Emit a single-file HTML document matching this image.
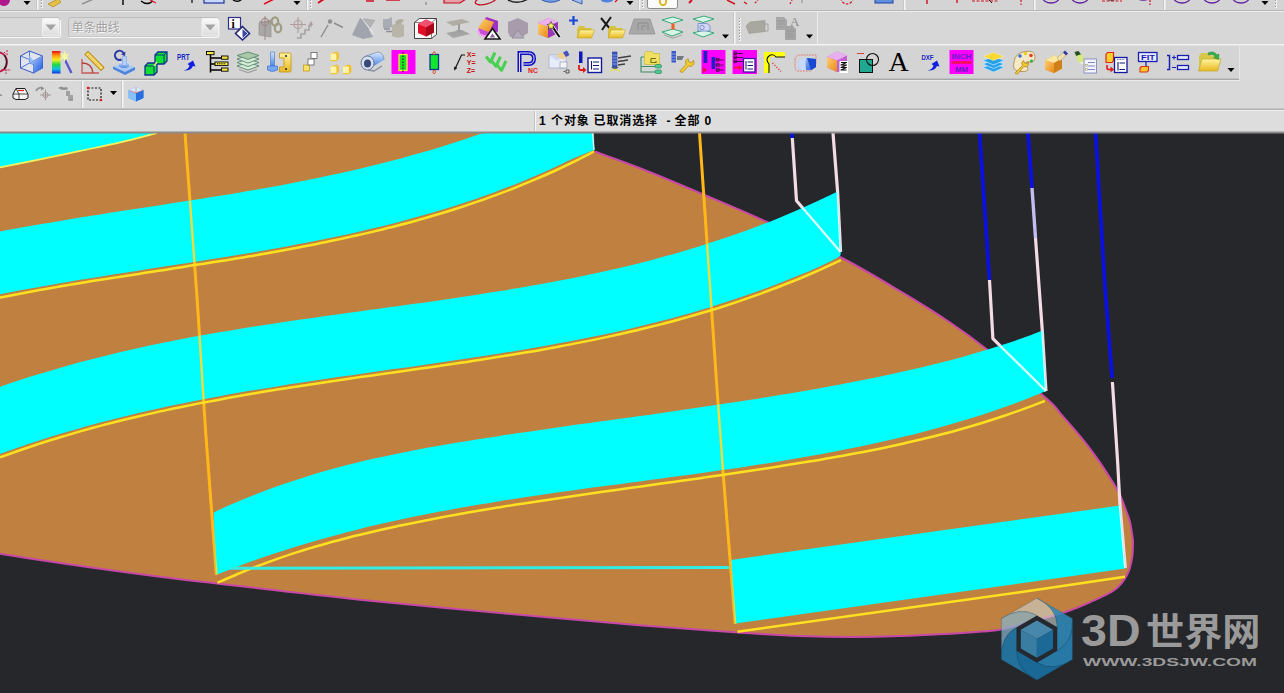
<!DOCTYPE html>
<html lang="zh-CN"><head><meta charset="utf-8"><title>NX</title>
<style>
html,body{margin:0;padding:0;background:#26272b;overflow:hidden}
svg{display:block}
text{font-family:"Liberation Sans","Noto Sans CJK SC",sans-serif}
</style></head><body>
<svg width="1284" height="693" viewBox="0 0 1284 693">
<rect x="0" y="133" width="1284" height="560" fill="#26272b"/>
<path d="M0 133L594 133L594.5 151.5C602.4 154.4 623.2 161.6 642.0 169.0C660.8 176.4 686.2 187.2 707.0 196.0C727.8 204.8 744.5 211.7 767.0 222.0C789.5 232.3 819.8 246.5 842.0 258.0C864.2 269.5 882.0 280.4 900.0 291.2C918.0 301.9 935.7 312.9 950.0 322.5C964.3 332.1 970.0 336.1 986.0 348.7C1002.0 361.3 1033.8 387.4 1046.2 398.2C1058.6 409.0 1054.6 406.9 1060.3 413.3C1066.0 419.7 1074.4 429.2 1080.5 436.6C1086.6 444.0 1091.7 450.7 1096.7 457.8C1101.8 464.9 1107.0 473.0 1110.8 479.0C1114.6 485.0 1117.0 489.0 1119.5 494.0C1122.0 499.0 1123.8 504.3 1125.5 509.0C1127.2 513.7 1128.8 516.8 1130.0 522.0C1131.2 527.2 1132.5 537.0 1133.0 540.0C1132.9 542.9 1133.2 551.5 1132.2 557.3C1131.2 563.1 1130.1 569.4 1127.2 574.8C1124.3 580.2 1121.0 585.2 1114.8 589.8C1108.6 594.4 1098.1 598.6 1089.8 602.3C1081.5 606.0 1074.8 608.9 1064.8 612.2C1054.8 615.5 1040.9 619.1 1030.0 622.0C1019.1 624.9 1012.9 627.8 999.5 629.8C986.1 631.8 970.4 632.6 949.6 633.8C928.8 635.0 899.6 636.4 874.7 636.8C849.8 637.2 823.3 636.8 800.0 636.0C776.7 635.2 751.7 633.3 735.0 632.3C718.3 631.3 715.5 630.9 700.0 629.8C684.5 628.7 651.7 626.2 642.0 625.5C618.3 623.4 547.0 617.3 500.0 613.0C453.0 608.7 407.0 604.6 359.8 599.7C312.6 594.8 250.3 587.3 217.0 583.5C183.7 579.7 179.5 579.3 160.0 576.8C140.5 574.3 118.3 571.2 100.0 568.7C81.7 566.2 66.7 564.0 50.0 561.5C33.3 559.0 8.3 555.1 0.0 553.8Z" fill="#c08040"/>
<path d="M594.5 151.5C602.4 154.4 623.2 161.6 642.0 169.0C660.8 176.4 686.2 187.2 707.0 196.0C727.8 204.8 744.5 211.7 767.0 222.0C789.5 232.3 819.8 246.5 842.0 258.0C864.2 269.5 882.0 280.4 900.0 291.2C918.0 301.9 935.7 312.9 950.0 322.5C964.3 332.1 970.0 336.1 986.0 348.7C1002.0 361.3 1033.8 387.4 1046.2 398.2C1058.6 409.0 1054.6 406.9 1060.3 413.3C1066.0 419.7 1074.4 429.2 1080.5 436.6C1086.6 444.0 1091.7 450.7 1096.7 457.8C1101.8 464.9 1107.0 473.0 1110.8 479.0C1114.6 485.0 1117.0 489.0 1119.5 494.0C1122.0 499.0 1123.8 504.3 1125.5 509.0C1127.2 513.7 1128.8 516.8 1130.0 522.0C1131.2 527.2 1132.5 537.0 1133.0 540.0C1132.9 542.9 1133.2 551.5 1132.2 557.3C1131.2 563.1 1130.1 569.4 1127.2 574.8C1124.3 580.2 1121.0 585.2 1114.8 589.8C1108.6 594.4 1098.1 598.6 1089.8 602.3C1081.5 606.0 1074.8 608.9 1064.8 612.2C1054.8 615.5 1040.9 619.1 1030.0 622.0C1019.1 624.9 1012.9 627.8 999.5 629.8C986.1 631.8 970.4 632.6 949.6 633.8C928.8 635.0 899.6 636.4 874.7 636.8C849.8 637.2 823.3 636.8 800.0 636.0C776.7 635.2 751.7 633.3 735.0 632.3C718.3 631.3 715.5 630.9 700.0 629.8C684.5 628.7 651.7 626.2 642.0 625.5C618.3 623.4 547.0 617.3 500.0 613.0C453.0 608.7 407.0 604.6 359.8 599.7C312.6 594.8 250.3 587.3 217.0 583.5C183.7 579.7 179.5 579.3 160.0 576.8C140.5 574.3 118.3 571.2 100.0 568.7C81.7 566.2 66.7 564.0 50.0 561.5C33.3 559.0 8.3 555.1 0.0 553.8" fill="none" stroke="#c848a8" stroke-width="2"/>
<path d="M185 133L197.2 300L205.5 430L216.4 575" fill="none" stroke="#ffb818" stroke-width="3"/>
<path d="M699.5 133L717.1 390L723.7 480L735.2 624" fill="none" stroke="#ffb818" stroke-width="3"/>
<path d="M792.0 133.0L792.3 138.0" fill="none" stroke="#0a10e0" stroke-width="3.7" stroke-linejoin="round"/>
<path d="M792.3 138.0L796.5 200.7L840.6 252.0" fill="none" stroke="#f4dce4" stroke-width="3.2" stroke-linejoin="round"/>
<path d="M833.0 133.0L837.6 191.6L840.6 252.0" fill="none" stroke="#f4dce4" stroke-width="3.2" stroke-linejoin="round"/>
<path d="M979.5 133.0L989.5 280.0" fill="none" stroke="#0a10e0" stroke-width="3.7" stroke-linejoin="round"/>
<path d="M989.5 280.0L992.9 338.7L1046.0 391.0" fill="none" stroke="#f4dce4" stroke-width="3.2" stroke-linejoin="round"/>
<path d="M1028.0 133.0L1032.0 188.0" fill="none" stroke="#0a10e0" stroke-width="3.7" stroke-linejoin="round"/>
<path d="M1032.0 188.0L1035.5 238.0" fill="none" stroke="#c4bcf0" stroke-width="3.4" stroke-linejoin="round"/>
<path d="M1035.5 238.0L1042.3 330.7L1046.0 391.0" fill="none" stroke="#f4dce4" stroke-width="3.2" stroke-linejoin="round"/>
<path d="M1095.5 133.0L1105.2 290.0L1112.2 378.0" fill="none" stroke="#0a10e0" stroke-width="3.7" stroke-linejoin="round"/>
<path d="M1112.4 382.0L1117.7 463.0L1120.0 505.5L1125.3 568.0" fill="none" stroke="#f4dce4" stroke-width="3.2" stroke-linejoin="round"/>
<path d="M0 133L157.0 133.0C156.2 133.2 158.7 132.6 152.5 134.2C146.3 135.8 132.1 139.6 120.0 142.4C107.9 145.2 93.3 148.1 80.0 150.9C66.7 153.7 53.3 156.6 40.0 159.3C26.7 162.1 6.7 166.1 0.0 167.4Z" fill="#00ffff"/>
<path d="M157.0 133.0C156.2 133.2 158.7 132.6 152.5 134.2C146.3 135.8 132.1 139.6 120.0 142.4C107.9 145.2 93.3 148.1 80.0 150.9C66.7 153.7 53.3 156.6 40.0 159.3C26.7 162.1 6.7 166.1 0.0 167.4" fill="none" stroke="#f4f25c" stroke-width="1.7"/>
<path d="M0.0 231.5C3.3 230.9 13.3 229.0 20.0 227.8C26.7 226.6 33.3 225.4 40.0 224.3C46.7 223.1 53.3 222.0 60.0 220.9C66.7 219.8 73.3 218.7 80.0 217.6C86.7 216.5 93.3 215.5 100.0 214.4C106.7 213.4 113.3 212.3 120.0 211.3C126.7 210.3 133.3 209.3 140.0 208.2C146.7 207.2 153.3 206.2 160.0 205.2C166.7 204.2 173.3 203.1 180.0 202.1C186.7 201.1 193.3 200.0 200.0 199.0C206.7 197.9 213.3 196.8 220.0 195.8C226.7 194.7 233.3 193.6 240.0 192.4C246.7 191.3 253.3 190.2 260.0 189.0C266.7 187.8 273.3 186.6 280.0 185.4C286.7 184.1 293.3 182.9 300.0 181.6C306.7 180.3 313.3 178.9 320.0 177.5C326.7 176.1 333.3 174.7 340.0 173.3C346.7 171.8 353.3 170.3 360.0 168.7C366.7 167.1 373.3 165.5 380.0 163.8C386.7 162.2 393.3 160.4 400.0 158.7C406.7 156.9 413.3 155.0 420.0 153.1C426.7 151.2 433.3 149.2 440.0 147.2C446.7 145.1 453.3 143.0 460.0 140.8C466.7 138.6 476.7 135.1 480.0 134.0L485 133L593.2 133L594.5 150.0C590.9 151.5 579.7 155.7 572.8 158.7C565.9 161.7 559.6 165.0 553.1 168.1C546.5 171.1 539.9 174.0 533.3 176.8C526.8 179.6 520.2 182.3 513.6 184.9C507.0 187.5 500.5 190.0 493.9 192.4C487.3 194.8 480.7 197.2 474.2 199.4C467.6 201.7 461.0 203.8 454.4 205.9C447.9 208.0 441.3 210.0 434.7 212.0C428.1 213.9 421.5 215.8 414.9 217.6C408.4 219.4 401.8 221.2 395.2 222.9C388.6 224.6 382.0 226.2 375.5 227.8C368.9 229.4 362.3 230.9 355.7 232.4C349.1 233.9 342.5 235.3 335.9 236.7C329.3 238.1 322.8 239.5 316.2 240.8C309.6 242.1 303.0 243.4 296.4 244.6C289.8 245.9 283.2 247.1 276.6 248.3C270.0 249.5 263.4 250.6 256.9 251.8C250.3 252.9 243.7 254.0 237.1 255.1C230.5 256.2 223.9 257.3 217.3 258.3C210.7 259.4 204.1 260.4 197.5 261.5C190.9 262.5 184.3 263.6 177.7 264.6C171.1 265.6 164.5 266.6 157.9 267.6C151.3 268.7 144.7 269.7 138.1 270.7C131.5 271.7 124.9 272.7 118.3 273.8C111.7 274.8 105.1 275.9 98.5 276.9C91.9 278.0 85.3 279.0 78.7 280.1C72.1 281.2 65.5 282.3 58.9 283.5C52.3 284.6 45.6 285.7 39.0 286.9C32.4 288.1 25.8 289.3 19.2 290.5C12.6 291.8 2.7 293.7 -0.6 294.4Z" fill="#00ffff"/>
<path d="M0.0 297.5C3.3 296.9 13.2 294.9 19.8 293.7C26.4 292.5 33.0 291.3 39.6 290.1C46.2 288.9 52.8 287.7 59.4 286.6C66.0 285.5 72.6 284.4 79.2 283.3C85.8 282.2 92.4 281.1 99.0 280.1C105.6 279.0 112.2 278.0 118.8 276.9C125.4 275.9 132.0 274.9 138.6 273.9C145.2 272.8 151.8 271.8 158.4 270.8C165.0 269.8 171.6 268.8 178.2 267.7C184.8 266.7 191.4 265.7 198.0 264.6C204.6 263.6 211.2 262.6 217.8 261.5C224.4 260.4 231.0 259.4 237.6 258.3C244.2 257.2 250.8 256.1 257.4 254.9C264.0 253.8 270.6 252.6 277.2 251.4C283.8 250.2 290.4 249.0 297.0 247.8C303.6 246.5 310.2 245.2 316.8 243.9C323.4 242.6 330.0 241.2 336.6 239.8C343.2 238.4 349.8 237.0 356.4 235.5C363.0 234.0 369.6 232.5 376.2 230.9C382.8 229.3 389.4 227.7 396.0 226.0C402.6 224.3 409.2 222.5 415.8 220.7C422.4 218.9 429.0 217.0 435.6 215.0C442.2 213.1 448.8 211.1 455.4 209.0C462.0 206.9 468.6 204.7 475.2 202.4C481.8 200.2 488.4 197.8 495.0 195.4C501.6 193.0 508.2 190.5 514.8 187.8C521.4 185.2 528.0 182.5 534.6 179.7C541.2 176.9 547.8 174.0 554.4 171.0C561.0 167.9 567.6 164.8 574.2 161.6C580.8 158.3 590.7 153.2 594.0 151.5" fill="none" stroke="#ffe020" stroke-width="2.5"/>
<path d="M0.0 386.9C3.3 385.8 13.3 382.3 19.9 380.1C26.6 378.0 33.2 375.8 39.9 373.8C46.5 371.8 53.2 369.8 59.8 367.9C66.5 366.0 73.1 364.1 79.8 362.3C86.4 360.6 93.1 358.8 99.7 357.2C106.4 355.5 113.0 353.9 119.7 352.3C126.3 350.8 133.0 349.3 139.6 347.8C146.2 346.3 152.9 344.9 159.5 343.5C166.2 342.2 172.8 340.9 179.5 339.6C186.1 338.3 192.8 337.0 199.4 335.8C206.1 334.6 212.7 333.4 219.4 332.3C226.0 331.1 232.7 330.0 239.3 328.9C246.0 327.8 252.6 326.8 259.3 325.8C265.9 324.7 272.6 323.7 279.2 322.7C285.8 321.7 292.5 320.7 299.1 319.8C305.8 318.8 312.4 317.9 319.1 316.9C325.7 316.0 332.4 315.1 339.0 314.2C345.7 313.2 352.3 312.3 359.0 311.4C365.6 310.5 372.3 309.6 378.9 308.7C385.6 307.8 392.2 306.9 398.9 306.0C405.5 305.0 412.2 304.1 418.8 303.2C425.4 302.3 432.1 301.3 438.7 300.4C445.4 299.4 452.0 298.5 458.7 297.5C465.3 296.5 472.0 295.5 478.6 294.5C485.3 293.4 491.9 292.4 498.6 291.3C505.2 290.2 511.9 289.1 518.5 288.0C525.2 286.9 531.8 285.7 538.5 284.5C545.1 283.3 551.8 282.1 558.4 280.8C565.0 279.6 571.7 278.2 578.3 276.9C585.0 275.5 591.6 274.1 598.3 272.7C604.9 271.2 611.6 269.7 618.2 268.2C624.9 266.6 631.5 265.0 638.2 263.4C644.8 261.7 651.5 260.0 658.1 258.2C664.8 256.4 671.4 254.6 678.1 252.7C684.7 250.7 691.4 248.8 698.0 246.7C704.6 244.7 711.3 242.5 717.9 240.3C724.6 238.1 731.2 235.9 737.9 233.5C744.5 231.2 751.2 228.7 757.8 226.2C764.5 223.7 771.1 221.1 777.8 218.4C784.4 215.7 791.1 212.9 797.7 210.0C804.4 207.2 811.0 204.2 817.7 201.1C824.3 198.1 834.3 193.2 837.6 191.6L840.6 252.0C840.2 252.8 842.0 254.6 838.5 257.0C835.0 259.4 826.1 263.4 819.7 266.4C813.2 269.4 806.4 272.3 799.7 275.0C793.1 277.8 786.4 280.5 779.8 283.0C773.1 285.6 766.5 288.1 759.8 290.6C753.2 293.0 746.5 295.3 739.9 297.6C733.2 299.8 726.5 302.0 719.9 304.1C713.2 306.2 706.6 308.3 699.9 310.2C693.3 312.2 686.6 314.1 680.0 315.9C673.3 317.8 666.6 319.5 660.0 321.3C653.3 323.0 646.7 324.6 640.0 326.2C633.4 327.8 626.7 329.4 620.0 330.9C613.4 332.4 606.7 333.8 600.1 335.2C593.4 336.6 586.7 338.0 580.1 339.3C573.4 340.6 566.7 341.9 560.1 343.1C553.4 344.4 546.8 345.6 540.1 346.7C533.4 347.9 526.8 349.1 520.1 350.2C513.4 351.3 506.8 352.4 500.1 353.4C493.4 354.5 486.8 355.5 480.1 356.6C473.4 357.6 466.7 358.6 460.1 359.6C453.4 360.6 446.7 361.6 440.1 362.5C433.4 363.5 426.7 364.5 420.0 365.4C413.4 366.4 406.7 367.3 400.0 368.3C393.4 369.2 386.7 370.1 380.0 371.1C373.3 372.0 366.7 373.0 360.0 373.9C353.3 374.9 346.6 375.9 339.9 376.8C333.3 377.8 326.6 378.8 319.9 379.8C313.2 380.8 306.6 381.8 299.9 382.8C293.2 383.8 286.5 384.9 279.8 385.9C273.1 387.0 266.5 388.1 259.8 389.2C253.1 390.3 246.4 391.4 239.7 392.6C233.1 393.8 226.4 395.0 219.7 396.2C213.0 397.4 206.3 398.7 199.6 400.0C192.9 401.3 186.3 402.6 179.6 404.0C172.9 405.4 166.2 406.8 159.5 408.3C152.8 409.8 146.1 411.3 139.4 412.8C132.7 414.4 126.1 416.0 119.4 417.7C112.7 419.4 106.0 421.1 99.3 422.8C92.6 424.6 85.9 426.5 79.2 428.4C72.5 430.2 65.8 432.2 59.1 434.2C52.5 436.3 45.8 438.3 39.1 440.5C32.4 442.7 25.7 444.9 19.0 447.2C12.3 449.5 2.3 453.1 -1.1 454.3Z" fill="#00ffff"/>
<path d="M0.0 457.3C3.3 456.1 13.3 452.5 20.0 450.2C26.7 447.9 33.4 445.7 40.0 443.5C46.7 441.4 53.4 439.3 60.1 437.3C66.7 435.3 73.4 433.3 80.1 431.4C86.8 429.5 93.4 427.7 100.1 425.9C106.8 424.2 113.5 422.5 120.1 420.8C126.8 419.1 133.5 417.5 140.2 416.0C146.8 414.4 153.5 412.9 160.2 411.4C166.9 410.0 173.5 408.5 180.2 407.2C186.9 405.8 193.6 404.4 200.2 403.1C206.9 401.8 213.6 400.6 220.3 399.4C226.9 398.1 233.6 396.9 240.3 395.8C247.0 394.6 253.6 393.5 260.3 392.3C267.0 391.2 273.7 390.2 280.3 389.1C287.0 388.0 293.7 387.0 300.4 386.0C307.0 384.9 313.7 383.9 320.4 382.9C327.1 381.9 333.7 381.0 340.4 380.0C347.1 379.0 353.8 378.1 360.4 377.1C367.1 376.2 373.8 375.2 380.5 374.3C387.1 373.3 393.8 372.4 400.5 371.4C407.2 370.5 413.8 369.5 420.5 368.6C427.2 367.6 433.8 366.7 440.5 365.7C447.2 364.7 453.9 363.7 460.5 362.8C467.2 361.8 473.9 360.8 480.6 359.7C487.2 358.7 493.9 357.7 500.6 356.6C507.3 355.5 513.9 354.4 520.6 353.3C527.3 352.2 534.0 351.1 540.6 349.9C547.3 348.7 554.0 347.5 560.7 346.3C567.3 345.0 574.0 343.8 580.7 342.4C587.4 341.1 594.0 339.8 600.7 338.4C607.4 336.9 614.1 335.5 620.7 334.0C627.4 332.5 634.1 331.0 640.8 329.3C647.4 327.7 654.1 326.1 660.8 324.4C667.5 322.6 674.1 320.9 680.8 319.0C687.5 317.2 694.2 315.3 700.8 313.3C707.5 311.3 714.2 309.3 720.9 307.2C727.5 305.1 734.2 302.9 740.9 300.6C747.6 298.3 754.2 296.0 760.9 293.6C767.6 291.1 774.3 288.6 780.9 286.0C787.6 283.4 794.3 280.7 801.0 278.0C807.6 275.2 814.3 272.3 821.0 269.4C827.7 266.4 837.7 261.7 841.0 260.2" fill="none" stroke="#ffe020" stroke-width="2.5"/>
<path d="M213.7 512.4C217.1 510.9 227.2 506.2 233.9 503.3C240.6 500.4 247.4 497.6 254.1 495.0C260.9 492.3 267.6 489.8 274.3 487.3C281.1 484.9 287.8 482.6 294.5 480.4C301.3 478.2 308.0 476.1 314.7 474.0C321.5 472.0 328.2 470.1 335.0 468.3C341.7 466.5 348.4 464.7 355.2 463.1C361.9 461.4 368.6 459.8 375.4 458.3C382.1 456.8 388.9 455.3 395.6 453.9C402.3 452.5 409.1 451.2 415.8 449.9C422.5 448.7 429.3 447.4 436.0 446.2C442.7 445.0 449.5 443.9 456.2 442.8C463.0 441.7 469.7 440.6 476.4 439.5C483.2 438.4 489.9 437.4 496.6 436.4C503.4 435.3 510.1 434.3 516.8 433.3C523.6 432.3 530.3 431.3 537.1 430.4C543.8 429.4 550.5 428.4 557.3 427.5C564.0 426.5 570.7 425.6 577.5 424.6C584.2 423.7 590.9 422.8 597.7 421.8C604.4 420.9 611.2 420.0 617.9 419.0C624.6 418.1 631.4 417.2 638.1 416.2C644.8 415.3 651.6 414.3 658.3 413.4C665.1 412.4 671.8 411.5 678.5 410.5C685.3 409.6 692.0 408.6 698.7 407.6C705.5 406.6 712.2 405.6 718.9 404.6C725.7 403.6 732.4 402.6 739.2 401.6C745.9 400.5 752.6 399.5 759.4 398.4C766.1 397.3 772.8 396.3 779.6 395.1C786.3 394.0 793.0 392.9 799.8 391.7C806.5 390.6 813.3 389.4 820.0 388.2C826.7 387.0 833.5 385.7 840.2 384.5C846.9 383.2 853.7 381.9 860.4 380.6C867.1 379.2 873.9 377.9 880.6 376.5C887.4 375.1 894.1 373.6 900.8 372.1C907.6 370.7 914.3 369.1 921.0 367.5C927.8 365.9 934.5 364.3 941.3 362.5C948.0 360.8 954.7 359.0 961.5 357.2C968.2 355.3 974.9 353.4 981.7 351.3C988.4 349.3 995.1 347.2 1001.9 345.0C1008.6 342.8 1015.4 340.6 1022.1 338.2C1028.8 335.8 1038.9 331.9 1042.3 330.7L1046.0 391.0C1042.6 392.4 1032.5 396.6 1025.8 399.2C1019.0 401.8 1012.3 404.3 1005.5 406.7C998.8 409.2 992.0 411.5 985.3 413.7C978.5 415.9 971.8 418.0 965.0 420.1C958.3 422.1 951.6 424.1 944.8 426.0C938.1 427.9 931.3 429.7 924.6 431.4C917.8 433.2 911.1 434.9 904.3 436.5C897.6 438.1 890.8 439.7 884.1 441.2C877.3 442.8 870.6 444.2 863.8 445.7C857.1 447.1 850.4 448.5 843.6 449.8C836.9 451.1 830.1 452.4 823.4 453.7C816.6 454.9 809.9 456.2 803.1 457.3C796.4 458.5 789.6 459.7 782.9 460.8C776.1 461.9 769.4 463.0 762.7 464.1C755.9 465.1 749.2 466.1 742.4 467.2C735.7 468.2 728.9 469.2 722.2 470.1C715.4 471.1 708.7 472.1 701.9 473.0C695.2 473.9 688.4 474.9 681.7 475.8C675.0 476.7 668.2 477.6 661.5 478.5C654.7 479.4 648.0 480.3 641.2 481.2C634.5 482.1 627.7 483.0 621.0 483.9C614.2 484.8 607.5 485.7 600.7 486.6C594.0 487.5 587.2 488.4 580.5 489.3C573.8 490.2 567.0 491.2 560.3 492.1C553.5 493.1 546.8 494.0 540.0 495.0C533.3 496.0 526.5 497.0 519.8 498.0C513.0 499.1 506.3 500.1 499.5 501.2C492.8 502.3 486.1 503.4 479.3 504.5C472.6 505.7 465.8 506.8 459.1 508.0C452.3 509.3 445.6 510.5 438.8 511.8C432.1 513.1 425.3 514.4 418.6 515.8C411.8 517.1 405.1 518.6 398.4 520.0C391.6 521.5 384.9 523.0 378.1 524.6C371.4 526.1 364.6 527.8 357.9 529.4C351.1 531.1 344.4 532.9 337.6 534.7C330.9 536.5 324.1 538.3 317.4 540.3C310.6 542.2 303.9 544.2 297.2 546.3C290.4 548.3 283.7 550.5 276.9 552.7C270.2 554.9 263.4 557.2 256.7 559.6C249.9 562.0 243.2 564.4 236.4 566.9C229.7 569.5 219.6 573.5 216.2 574.8Z" fill="#00ffff"/>
<path d="M217.5 582.8C220.9 581.3 231.0 576.8 237.7 574.0C244.4 571.2 251.1 568.5 257.9 566.0C264.6 563.4 271.3 561.0 278.0 558.6C284.8 556.3 291.5 554.0 298.2 551.9C304.9 549.8 311.7 547.7 318.4 545.8C325.1 543.8 331.8 542.0 338.6 540.2C345.3 538.4 352.0 536.7 358.7 535.0C365.5 533.3 372.2 531.8 378.9 530.2C385.7 528.7 392.4 527.3 399.1 525.8C405.8 524.4 412.6 523.0 419.3 521.7C426.0 520.4 432.7 519.1 439.5 517.8C446.2 516.5 452.9 515.3 459.6 514.1C466.4 512.9 473.1 511.7 479.8 510.6C486.5 509.4 493.3 508.3 500.0 507.2C506.7 506.1 513.4 505.0 520.2 504.0C526.9 502.9 533.6 501.9 540.3 500.9C547.1 499.8 553.8 498.8 560.5 497.9C567.3 496.9 574.0 495.9 580.7 494.9C587.4 493.9 594.2 493.0 600.9 492.0C607.6 491.1 614.3 490.1 621.1 489.2C627.8 488.3 634.5 487.3 641.2 486.4C648.0 485.4 654.7 484.5 661.4 483.6C668.1 482.6 674.9 481.7 681.6 480.7C688.3 479.8 695.0 478.8 701.8 477.9C708.5 476.9 715.2 476.0 722.0 475.0C728.7 474.0 735.4 473.0 742.1 472.0C748.9 471.0 755.6 470.0 762.3 469.0C769.0 467.9 775.8 466.9 782.5 465.8C789.2 464.8 795.9 463.7 802.7 462.6C809.4 461.5 816.1 460.4 822.8 459.2C829.6 458.1 836.3 456.9 843.0 455.7C849.7 454.4 856.5 453.2 863.2 451.9C869.9 450.6 876.6 449.3 883.4 447.9C890.1 446.5 896.8 445.0 903.6 443.5C910.3 442.0 917.0 440.4 923.7 438.8C930.5 437.2 937.2 435.5 943.9 433.7C950.6 432.0 957.4 430.1 964.1 428.2C970.8 426.3 977.5 424.3 984.3 422.2C991.0 420.1 997.7 418.0 1004.4 415.7C1011.2 413.4 1017.9 411.1 1024.6 408.6C1031.3 406.2 1041.4 402.3 1044.8 401.0" fill="none" stroke="#ffe020" stroke-width="2.5"/>
<path d="M230 568.2L729 567.6" fill="none" stroke="#30ece4" stroke-width="3"/>
<path d="M731.2 559.9L1119.8 505.6L1125.3 568.6L735 623.5Z" fill="#00ffff"/>
<path d="M737.4 631.8L1020 592.3L1125 576.8" fill="none" stroke="#ffe020" stroke-width="2.5"/>
<clipPath id="bands"><path d="M0 133L157.0 133.0C156.2 133.2 158.7 132.6 152.5 134.2C146.3 135.8 132.1 139.6 120.0 142.4C107.9 145.2 93.3 148.1 80.0 150.9C66.7 153.7 53.3 156.6 40.0 159.3C26.7 162.1 6.7 166.1 0.0 167.4Z"/><path d="M0.0 231.5C3.3 230.9 13.3 229.0 20.0 227.8C26.7 226.6 33.3 225.4 40.0 224.3C46.7 223.1 53.3 222.0 60.0 220.9C66.7 219.8 73.3 218.7 80.0 217.6C86.7 216.5 93.3 215.5 100.0 214.4C106.7 213.4 113.3 212.3 120.0 211.3C126.7 210.3 133.3 209.3 140.0 208.2C146.7 207.2 153.3 206.2 160.0 205.2C166.7 204.2 173.3 203.1 180.0 202.1C186.7 201.1 193.3 200.0 200.0 199.0C206.7 197.9 213.3 196.8 220.0 195.8C226.7 194.7 233.3 193.6 240.0 192.4C246.7 191.3 253.3 190.2 260.0 189.0C266.7 187.8 273.3 186.6 280.0 185.4C286.7 184.1 293.3 182.9 300.0 181.6C306.7 180.3 313.3 178.9 320.0 177.5C326.7 176.1 333.3 174.7 340.0 173.3C346.7 171.8 353.3 170.3 360.0 168.7C366.7 167.1 373.3 165.5 380.0 163.8C386.7 162.2 393.3 160.4 400.0 158.7C406.7 156.9 413.3 155.0 420.0 153.1C426.7 151.2 433.3 149.2 440.0 147.2C446.7 145.1 453.3 143.0 460.0 140.8C466.7 138.6 476.7 135.1 480.0 134.0L485 133L593.2 133L594.5 150.0C590.9 151.5 579.7 155.7 572.8 158.7C565.9 161.7 559.6 165.0 553.1 168.1C546.5 171.1 539.9 174.0 533.3 176.8C526.8 179.6 520.2 182.3 513.6 184.9C507.0 187.5 500.5 190.0 493.9 192.4C487.3 194.8 480.7 197.2 474.2 199.4C467.6 201.7 461.0 203.8 454.4 205.9C447.9 208.0 441.3 210.0 434.7 212.0C428.1 213.9 421.5 215.8 414.9 217.6C408.4 219.4 401.8 221.2 395.2 222.9C388.6 224.6 382.0 226.2 375.5 227.8C368.9 229.4 362.3 230.9 355.7 232.4C349.1 233.9 342.5 235.3 335.9 236.7C329.3 238.1 322.8 239.5 316.2 240.8C309.6 242.1 303.0 243.4 296.4 244.6C289.8 245.9 283.2 247.1 276.6 248.3C270.0 249.5 263.4 250.6 256.9 251.8C250.3 252.9 243.7 254.0 237.1 255.1C230.5 256.2 223.9 257.3 217.3 258.3C210.7 259.4 204.1 260.4 197.5 261.5C190.9 262.5 184.3 263.6 177.7 264.6C171.1 265.6 164.5 266.6 157.9 267.6C151.3 268.7 144.7 269.7 138.1 270.7C131.5 271.7 124.9 272.7 118.3 273.8C111.7 274.8 105.1 275.9 98.5 276.9C91.9 278.0 85.3 279.0 78.7 280.1C72.1 281.2 65.5 282.3 58.9 283.5C52.3 284.6 45.6 285.7 39.0 286.9C32.4 288.1 25.8 289.3 19.2 290.5C12.6 291.8 2.7 293.7 -0.6 294.4Z"/><path d="M0.0 386.9C3.3 385.8 13.3 382.3 19.9 380.1C26.6 378.0 33.2 375.8 39.9 373.8C46.5 371.8 53.2 369.8 59.8 367.9C66.5 366.0 73.1 364.1 79.8 362.3C86.4 360.6 93.1 358.8 99.7 357.2C106.4 355.5 113.0 353.9 119.7 352.3C126.3 350.8 133.0 349.3 139.6 347.8C146.2 346.3 152.9 344.9 159.5 343.5C166.2 342.2 172.8 340.9 179.5 339.6C186.1 338.3 192.8 337.0 199.4 335.8C206.1 334.6 212.7 333.4 219.4 332.3C226.0 331.1 232.7 330.0 239.3 328.9C246.0 327.8 252.6 326.8 259.3 325.8C265.9 324.7 272.6 323.7 279.2 322.7C285.8 321.7 292.5 320.7 299.1 319.8C305.8 318.8 312.4 317.9 319.1 316.9C325.7 316.0 332.4 315.1 339.0 314.2C345.7 313.2 352.3 312.3 359.0 311.4C365.6 310.5 372.3 309.6 378.9 308.7C385.6 307.8 392.2 306.9 398.9 306.0C405.5 305.0 412.2 304.1 418.8 303.2C425.4 302.3 432.1 301.3 438.7 300.4C445.4 299.4 452.0 298.5 458.7 297.5C465.3 296.5 472.0 295.5 478.6 294.5C485.3 293.4 491.9 292.4 498.6 291.3C505.2 290.2 511.9 289.1 518.5 288.0C525.2 286.9 531.8 285.7 538.5 284.5C545.1 283.3 551.8 282.1 558.4 280.8C565.0 279.6 571.7 278.2 578.3 276.9C585.0 275.5 591.6 274.1 598.3 272.7C604.9 271.2 611.6 269.7 618.2 268.2C624.9 266.6 631.5 265.0 638.2 263.4C644.8 261.7 651.5 260.0 658.1 258.2C664.8 256.4 671.4 254.6 678.1 252.7C684.7 250.7 691.4 248.8 698.0 246.7C704.6 244.7 711.3 242.5 717.9 240.3C724.6 238.1 731.2 235.9 737.9 233.5C744.5 231.2 751.2 228.7 757.8 226.2C764.5 223.7 771.1 221.1 777.8 218.4C784.4 215.7 791.1 212.9 797.7 210.0C804.4 207.2 811.0 204.2 817.7 201.1C824.3 198.1 834.3 193.2 837.6 191.6L840.6 252.0C840.2 252.8 842.0 254.6 838.5 257.0C835.0 259.4 826.1 263.4 819.7 266.4C813.2 269.4 806.4 272.3 799.7 275.0C793.1 277.8 786.4 280.5 779.8 283.0C773.1 285.6 766.5 288.1 759.8 290.6C753.2 293.0 746.5 295.3 739.9 297.6C733.2 299.8 726.5 302.0 719.9 304.1C713.2 306.2 706.6 308.3 699.9 310.2C693.3 312.2 686.6 314.1 680.0 315.9C673.3 317.8 666.6 319.5 660.0 321.3C653.3 323.0 646.7 324.6 640.0 326.2C633.4 327.8 626.7 329.4 620.0 330.9C613.4 332.4 606.7 333.8 600.1 335.2C593.4 336.6 586.7 338.0 580.1 339.3C573.4 340.6 566.7 341.9 560.1 343.1C553.4 344.4 546.8 345.6 540.1 346.7C533.4 347.9 526.8 349.1 520.1 350.2C513.4 351.3 506.8 352.4 500.1 353.4C493.4 354.5 486.8 355.5 480.1 356.6C473.4 357.6 466.7 358.6 460.1 359.6C453.4 360.6 446.7 361.6 440.1 362.5C433.4 363.5 426.7 364.5 420.0 365.4C413.4 366.4 406.7 367.3 400.0 368.3C393.4 369.2 386.7 370.1 380.0 371.1C373.3 372.0 366.7 373.0 360.0 373.9C353.3 374.9 346.6 375.9 339.9 376.8C333.3 377.8 326.6 378.8 319.9 379.8C313.2 380.8 306.6 381.8 299.9 382.8C293.2 383.8 286.5 384.9 279.8 385.9C273.1 387.0 266.5 388.1 259.8 389.2C253.1 390.3 246.4 391.4 239.7 392.6C233.1 393.8 226.4 395.0 219.7 396.2C213.0 397.4 206.3 398.7 199.6 400.0C192.9 401.3 186.3 402.6 179.6 404.0C172.9 405.4 166.2 406.8 159.5 408.3C152.8 409.8 146.1 411.3 139.4 412.8C132.7 414.4 126.1 416.0 119.4 417.7C112.7 419.4 106.0 421.1 99.3 422.8C92.6 424.6 85.9 426.5 79.2 428.4C72.5 430.2 65.8 432.2 59.1 434.2C52.5 436.3 45.8 438.3 39.1 440.5C32.4 442.7 25.7 444.9 19.0 447.2C12.3 449.5 2.3 453.1 -1.1 454.3Z"/><path d="M213.7 512.4C217.1 510.9 227.2 506.2 233.9 503.3C240.6 500.4 247.4 497.6 254.1 495.0C260.9 492.3 267.6 489.8 274.3 487.3C281.1 484.9 287.8 482.6 294.5 480.4C301.3 478.2 308.0 476.1 314.7 474.0C321.5 472.0 328.2 470.1 335.0 468.3C341.7 466.5 348.4 464.7 355.2 463.1C361.9 461.4 368.6 459.8 375.4 458.3C382.1 456.8 388.9 455.3 395.6 453.9C402.3 452.5 409.1 451.2 415.8 449.9C422.5 448.7 429.3 447.4 436.0 446.2C442.7 445.0 449.5 443.9 456.2 442.8C463.0 441.7 469.7 440.6 476.4 439.5C483.2 438.4 489.9 437.4 496.6 436.4C503.4 435.3 510.1 434.3 516.8 433.3C523.6 432.3 530.3 431.3 537.1 430.4C543.8 429.4 550.5 428.4 557.3 427.5C564.0 426.5 570.7 425.6 577.5 424.6C584.2 423.7 590.9 422.8 597.7 421.8C604.4 420.9 611.2 420.0 617.9 419.0C624.6 418.1 631.4 417.2 638.1 416.2C644.8 415.3 651.6 414.3 658.3 413.4C665.1 412.4 671.8 411.5 678.5 410.5C685.3 409.6 692.0 408.6 698.7 407.6C705.5 406.6 712.2 405.6 718.9 404.6C725.7 403.6 732.4 402.6 739.2 401.6C745.9 400.5 752.6 399.5 759.4 398.4C766.1 397.3 772.8 396.3 779.6 395.1C786.3 394.0 793.0 392.9 799.8 391.7C806.5 390.6 813.3 389.4 820.0 388.2C826.7 387.0 833.5 385.7 840.2 384.5C846.9 383.2 853.7 381.9 860.4 380.6C867.1 379.2 873.9 377.9 880.6 376.5C887.4 375.1 894.1 373.6 900.8 372.1C907.6 370.7 914.3 369.1 921.0 367.5C927.8 365.9 934.5 364.3 941.3 362.5C948.0 360.8 954.7 359.0 961.5 357.2C968.2 355.3 974.9 353.4 981.7 351.3C988.4 349.3 995.1 347.2 1001.9 345.0C1008.6 342.8 1015.4 340.6 1022.1 338.2C1028.8 335.8 1038.9 331.9 1042.3 330.7L1046.0 391.0C1042.6 392.4 1032.5 396.6 1025.8 399.2C1019.0 401.8 1012.3 404.3 1005.5 406.7C998.8 409.2 992.0 411.5 985.3 413.7C978.5 415.9 971.8 418.0 965.0 420.1C958.3 422.1 951.6 424.1 944.8 426.0C938.1 427.9 931.3 429.7 924.6 431.4C917.8 433.2 911.1 434.9 904.3 436.5C897.6 438.1 890.8 439.7 884.1 441.2C877.3 442.8 870.6 444.2 863.8 445.7C857.1 447.1 850.4 448.5 843.6 449.8C836.9 451.1 830.1 452.4 823.4 453.7C816.6 454.9 809.9 456.2 803.1 457.3C796.4 458.5 789.6 459.7 782.9 460.8C776.1 461.9 769.4 463.0 762.7 464.1C755.9 465.1 749.2 466.1 742.4 467.2C735.7 468.2 728.9 469.2 722.2 470.1C715.4 471.1 708.7 472.1 701.9 473.0C695.2 473.9 688.4 474.9 681.7 475.8C675.0 476.7 668.2 477.6 661.5 478.5C654.7 479.4 648.0 480.3 641.2 481.2C634.5 482.1 627.7 483.0 621.0 483.9C614.2 484.8 607.5 485.7 600.7 486.6C594.0 487.5 587.2 488.4 580.5 489.3C573.8 490.2 567.0 491.2 560.3 492.1C553.5 493.1 546.8 494.0 540.0 495.0C533.3 496.0 526.5 497.0 519.8 498.0C513.0 499.1 506.3 500.1 499.5 501.2C492.8 502.3 486.1 503.4 479.3 504.5C472.6 505.7 465.8 506.8 459.1 508.0C452.3 509.3 445.6 510.5 438.8 511.8C432.1 513.1 425.3 514.4 418.6 515.8C411.8 517.1 405.1 518.6 398.4 520.0C391.6 521.5 384.9 523.0 378.1 524.6C371.4 526.1 364.6 527.8 357.9 529.4C351.1 531.1 344.4 532.9 337.6 534.7C330.9 536.5 324.1 538.3 317.4 540.3C310.6 542.2 303.9 544.2 297.2 546.3C290.4 548.3 283.7 550.5 276.9 552.7C270.2 554.9 263.4 557.2 256.7 559.6C249.9 562.0 243.2 564.4 236.4 566.9C229.7 569.5 219.6 573.5 216.2 574.8Z"/><path d="M731.2 559.9L1119.8 505.6L1125.3 568.6L735 623.5Z"/></clipPath>
<g clip-path="url(#bands)"><path d="M185 133L197.2 300L205.5 430L216.4 575" fill="none" stroke="#ecdc40" stroke-width="2.4"/><path d="M699.5 133L717.1 390L723.7 480L735.2 624" fill="none" stroke="#ecdc40" stroke-width="2.4"/><path d="M593.2 133L594.5 150" fill="none" stroke="#e0ffff" stroke-width="2.4"/><path d="M796.5 200.7L840.6 252" fill="none" stroke="#dcffff" stroke-width="2.3"/><path d="M833 133L837.6 191.6L840.6 252" fill="none" stroke="#d8ffff" stroke-width="2.2"/><path d="M992.9 338.7L1046 391" fill="none" stroke="#dcffff" stroke-width="2.3"/><path d="M1035.5 238L1042.3 330.7L1046 391" fill="none" stroke="#d8ffff" stroke-width="2.2"/><path d="M1120 505.5L1125.3 568" fill="none" stroke="#e8ffff" stroke-width="2.4"/></g>
<path d="M1001.4 618.6L1036.9 598.1Q1056.5 607.9 1057.1 625.1L1057.1 650.8L1057.1 627.5L1034.9 614.6Q1019.7 606.5 1001.4 618.6Z" fill="#ccd0cc" fill-opacity="0.62" stroke="#184c6c" stroke-opacity="0.5" stroke-width="0.5"/>
<path d="M1036.9 598.1L1072.4 618.6Q1073.7 640.5 1059.1 649.6L1036.9 662.4L1057.1 650.8L1057.1 625.1Q1056.5 607.9 1036.9 598.1Z" fill="#2e8cba" fill-opacity="0.86" stroke="#184c6c" stroke-opacity="0.5" stroke-width="0.5"/>
<path d="M1072.4 618.6L1072.4 659.6Q1054.1 671.7 1038.9 663.6L1016.7 650.8L1036.9 662.4L1059.1 649.6Q1073.7 640.5 1072.4 618.6Z" fill="#2882b2" fill-opacity="0.9" stroke="#184c6c" stroke-opacity="0.5" stroke-width="0.5"/>
<path d="M1072.4 659.6L1036.9 680.1Q1017.3 670.3 1016.7 653.1L1016.7 627.5L1016.7 650.8L1038.9 663.6Q1054.1 671.7 1072.4 659.6Z" fill="#196c9b" fill-opacity="0.95" stroke="#184c6c" stroke-opacity="0.5" stroke-width="0.5"/>
<path d="M1036.9 680.1L1001.4 659.6Q1000.1 637.7 1014.7 628.6L1036.9 615.8L1016.7 627.5L1016.7 653.1Q1017.3 670.3 1036.9 680.1Z" fill="#2376a4" fill-opacity="0.92" stroke="#184c6c" stroke-opacity="0.5" stroke-width="0.5"/>
<path d="M1001.4 659.6L1001.4 618.6Q1019.7 606.5 1034.9 614.6L1057.1 627.5L1036.9 615.8L1014.7 628.6Q1000.1 637.7 1001.4 659.6Z" fill="#86b4cc" fill-opacity="0.72" stroke="#184c6c" stroke-opacity="0.5" stroke-width="0.5"/>
<polygon points="1036.9,615.8 1057.1,627.5 1057.1,650.8 1036.9,662.4 1016.7,650.8 1016.7,627.5" fill="#25282e"/>
<polygon points="1020.8,629.8 1036.9,620.5 1053.0,629.8 1036.9,639.1" fill="#4687ab"/>
<polygon points="1020.8,629.8 1036.9,639.1 1036.9,657.7 1020.8,648.4" fill="#3a7da3"/>
<polygon points="1053.0,629.8 1053.0,648.4 1036.9,657.7 1036.9,639.1" fill="#1b6997"/>
<text x="1081" y="646.2" font-size="43.5" font-weight="bold" fill="#9a9a9a" textLength="59.5" lengthAdjust="spacingAndGlyphs">3D</text>
<text x="1146" y="644.5" font-size="37.5" font-weight="bold" fill="#9a9a9a" textLength="114.5" lengthAdjust="spacingAndGlyphs" style="font-family:'Noto Sans CJK SC',sans-serif">世界网</text>
<text x="1083" y="666" font-size="11.6" font-weight="bold" fill="#9a9a9a" textLength="174" lengthAdjust="spacingAndGlyphs">WWW.3DSJW.COM</text>
<defs>
<linearGradient id="rb" x1="0" y1="0" x2="0" y2="1"><stop offset="0" stop-color="#e81010"/><stop offset="0.2" stop-color="#ff9a10"/><stop offset="0.4" stop-color="#f0f020"/><stop offset="0.6" stop-color="#20d840"/><stop offset="0.8" stop-color="#10c0e8"/><stop offset="1" stop-color="#1030e0"/></linearGradient>
<linearGradient id="bl" x1="0" y1="0" x2="1" y2="1"><stop offset="0" stop-color="#b8d4ff"/><stop offset="1" stop-color="#1c58e0"/></linearGradient>
<linearGradient id="bl2" x1="0" y1="0" x2="0" y2="1"><stop offset="0" stop-color="#d8e8ff"/><stop offset="1" stop-color="#4a86e0"/></linearGradient>
<linearGradient id="yl" x1="0" y1="0" x2="0" y2="1"><stop offset="0" stop-color="#fff6a0"/><stop offset="1" stop-color="#e8b820"/></linearGradient>
<linearGradient id="og" x1="0" y1="0" x2="1" y2="1"><stop offset="0" stop-color="#ffd070"/><stop offset="1" stop-color="#e88818"/></linearGradient>
<linearGradient id="gy" x1="0" y1="0" x2="1" y2="1"><stop offset="0" stop-color="#c4c4c4"/><stop offset="1" stop-color="#9c9c9c"/></linearGradient>
<linearGradient id="dd" x1="0" y1="0" x2="0" y2="1"><stop offset="0" stop-color="#fafafa"/><stop offset="1" stop-color="#dcdcdc"/></linearGradient>
</defs>
<rect x="0" y="0" width="1284" height="133" fill="#d4d4d4"/>
<rect x="0" y="81" width="1284" height="27" fill="#d9d9d9"/>
<rect x="1240" y="46" width="44" height="36" fill="#dadada"/>
<rect x="818" y="12" width="466" height="32" fill="#d7d7d7"/>
<rect x="0" y="10" width="1284" height="1" fill="#b8b8b8"/>
<rect x="0" y="11" width="1284" height="1" fill="#ececec"/>
<rect x="0" y="44" width="1284" height="1" fill="#f2f2f2"/>
<rect x="0" y="45" width="1284" height="1" fill="#e4e4e4"/>
<rect x="0" y="78" width="1240" height="1" fill="#c0c0c0"/>
<rect x="0" y="79" width="1240" height="1" fill="#a8a8a8"/>
<rect x="0" y="80" width="1240" height="1" fill="#ececec"/>
<rect x="0" y="108" width="1284" height="1" fill="#c4c4c4"/>
<rect x="0" y="109" width="1284" height="1" fill="#b0b0b0"/>
<rect x="0" y="110" width="1284" height="1" fill="#f0f0f0"/>
<rect x="0" y="111" width="1284" height="20" fill="#dddddd"/>
<rect x="0" y="131" width="1284" height="1" fill="#b4b4b4"/>
<rect x="0" y="132" width="1284" height="1.5" fill="#8a8a8a"/>
<rect x="535" y="111" width="1" height="20" fill="#f6f6f6"/>
<rect x="534" y="111" width="1" height="20" fill="#c4c4c4"/>
<path d="M23.5 1h7l-3.5 4z" fill="#000"/>
<rect x="36" y="0" width="1" height="10" fill="#c6c6c6"/>
<rect x="37" y="0" width="1.5" height="10" fill="#f6f6f6"/>
<rect x="41" y="0" width="2" height="2" fill="#f8f8f8"/><rect x="41" y="0" width="1" height="1" fill="#909090"/>
<rect x="41" y="3" width="2" height="2" fill="#f8f8f8"/><rect x="41" y="3" width="1" height="1" fill="#909090"/>
<rect x="41" y="6" width="2" height="2" fill="#f8f8f8"/><rect x="41" y="6" width="1" height="1" fill="#909090"/>
<path d="M-2 0a6 6 0 0 0 12 0z" fill="#b01890"/>
<path d="M48 4l10-5 3 3-8 5z" fill="#e8c040" stroke="#a07818" stroke-width="0.6"/>
<path d="M82 4l14-6" stroke="#909090" stroke-width="1.4"/>
<path d="M123 0v5" stroke="#000" stroke-width="1.4"/>
<path d="M141 1q6 5 12 0" stroke="#000" stroke-width="1.4" fill="none"/><path d="M150 0l6 3" stroke="#e01020" stroke-width="1.2"/>
<path d="M192 0v3" stroke="#000" stroke-width="1.2"/>
<rect x="204" y="-3" width="20" height="6" fill="#c8d8f8" stroke="#2030a0" stroke-width="1.2"/>
<path d="M233 0q5 3 9-1" stroke="#000" stroke-width="1.4" fill="none"/>
<path d="M264 4l12-6" stroke="#e01020" stroke-width="1.6"/>
<path d="M293.5 1h7l-3.5 4z" fill="#000"/>
<rect x="306" y="0" width="1" height="10" fill="#c6c6c6"/>
<rect x="307" y="0" width="1.5" height="10" fill="#f6f6f6"/>
<rect x="310" y="0" width="2" height="2" fill="#f8f8f8"/><rect x="310" y="0" width="1" height="1" fill="#909090"/>
<rect x="310" y="3" width="2" height="2" fill="#f8f8f8"/><rect x="310" y="3" width="1" height="1" fill="#909090"/>
<rect x="310" y="6" width="2" height="2" fill="#f8f8f8"/><rect x="310" y="6" width="1" height="1" fill="#909090"/>
<path d="M318 3l6-4" stroke="#d01020" stroke-width="2"/>
<path d="M366 1h8M386 0h14" stroke="#d01020" stroke-width="1.6"/>
<path d="M426 2v3" stroke="#909090" stroke-width="1.4"/>
<path d="M444 -1h22l-6 4h-16z" fill="#e8a0a8" stroke="#c01020" stroke-width="1.2"/>
<ellipse cx="486" cy="0" rx="11" ry="4" fill="none" stroke="#c01020" stroke-width="1.3" transform="rotate(-15 486 0)"/>
<path d="M508 0q10 5 20-1" stroke="#202020" stroke-width="1.4" fill="none"/>
<path d="M540 -1q10 6 20 1v-2z" fill="#70a0e8" stroke="#2040a0" stroke-width="0.8"/>
<path d="M572 0l10 4v-6z" fill="#a0c0f0" stroke="#2040a0" stroke-width="0.8"/>
<ellipse cx="607" cy="0" rx="6" ry="2.5" fill="#5080e0"/>
<path d="M615 2l3-3" stroke="#d01020" stroke-width="1.2"/>
<path d="M626.5 1h7l-3.5 4z" fill="#000"/>
<rect x="638" y="0" width="1" height="10" fill="#c6c6c6"/>
<rect x="639" y="0" width="1.5" height="10" fill="#f6f6f6"/>
<rect x="642" y="0" width="2" height="2" fill="#f8f8f8"/><rect x="642" y="0" width="1" height="1" fill="#909090"/>
<rect x="642" y="3" width="2" height="2" fill="#f8f8f8"/><rect x="642" y="3" width="1" height="1" fill="#909090"/>
<rect x="642" y="6" width="2" height="2" fill="#f8f8f8"/><rect x="642" y="6" width="1" height="1" fill="#909090"/>
<rect x="647.5" y="-6" width="30" height="14.5" rx="2" fill="#fbfbfb" stroke="#8c8c8c" stroke-width="1"/>
<ellipse cx="663" cy="1" rx="3.2" ry="4.2" fill="none" stroke="#d8b010" stroke-width="1.8"/>
<path d="M689 3l3-3" stroke="#d01020" stroke-width="2"/>
<path d="M727 0l8 4M744 2l3 2" stroke="#d01020" stroke-width="1.4"/>
<path d="M755 3l3-3M790 4l2-4" stroke="#d01020" stroke-width="1.2" stroke-dasharray="2 1.5"/>
<path d="M802 0v3" stroke="#a0a0a0" stroke-width="1.4"/>
<path d="M841 -2a6 6 0 0 0 12 0" stroke="#d01020" stroke-width="1.2" fill="none" stroke-dasharray="2.5 1.5"/>
<rect x="875" y="-4" width="18" height="7" fill="#6090e0" stroke="#2040a0" stroke-width="1"/>
<rect x="903" y="0" width="1" height="10" fill="#c6c6c6"/>
<rect x="904" y="0" width="1.5" height="10" fill="#f6f6f6"/>
<path d="M927 0v4M957 0v3" stroke="#d01020" stroke-width="1.4"/>
<path d="M972 1h26" stroke="#d01020" stroke-width="1.2" stroke-dasharray="3 1.5"/><path d="M988 -1l4 4" stroke="#202020" stroke-width="1"/>
<path d="M1021 0v5" stroke="#d01020" stroke-width="1.2" stroke-dasharray="2 1.5"/>
<rect x="1033" y="0" width="1" height="10" fill="#c6c6c6"/>
<rect x="1034" y="0" width="1.5" height="10" fill="#f6f6f6"/>
<path d="M1043 -2a8 5 0 0 0 16 0" stroke="#6020a0" stroke-width="1.3" fill="none"/>
<path d="M1072 -2a8 5 0 0 0 16 0" stroke="#6020a0" stroke-width="1.3" fill="none"/>
<path d="M1174 -2a8 5 0 0 0 16 0" stroke="#6020a0" stroke-width="1.3" fill="none"/>
<path d="M1204 -2a8 5 0 0 0 16 0" stroke="#6020a0" stroke-width="1.3" fill="none"/>
<path d="M1233 -2a8 5 0 0 0 16 0" stroke="#6020a0" stroke-width="1.3" fill="none"/>
<path d="M1102 1h20" stroke="#d01020" stroke-width="1.2" stroke-dasharray="3 1.5"/><path d="M1104 -2q8 4 14 0" stroke="#202020" stroke-width="1.2" fill="none"/>
<path d="M1136 -3a8 5 0 0 0 14 1" stroke="#6020a0" stroke-width="1.3" fill="none"/><path d="M1150 0v5" stroke="#d01020" stroke-width="1.2" stroke-dasharray="2 1.5"/>
<rect x="1163" y="0" width="1" height="10" fill="#c6c6c6"/>
<rect x="1164" y="0" width="1.5" height="10" fill="#f6f6f6"/>
<path d="M1261.5 1h7l-3.5 4z" fill="#000"/>
<rect x="1275" y="0" width="2" height="2" fill="#f8f8f8"/><rect x="1275" y="0" width="1" height="1" fill="#909090"/>
<rect x="1275" y="3" width="2" height="2" fill="#f8f8f8"/><rect x="1275" y="3" width="1" height="1" fill="#909090"/>
<rect x="1275" y="6" width="2" height="2" fill="#f8f8f8"/><rect x="1275" y="6" width="1" height="1" fill="#909090"/>
<rect x="-4" y="17.5" width="64" height="19.5" rx="2.5" fill="#d8d8d8" stroke="#bdbdbd" stroke-width="1"/>
<path d="M-4 37.5h62q2.5 0 2.5-2.5v-15" fill="none" stroke="#f6f6f6" stroke-width="1.2"/>
<rect x="42.5" y="18.5" width="16.5" height="17.5" rx="1.5" fill="url(#dd)" stroke="#f8f8f8" stroke-width="0.8"/>
<path d="M45.5 24.5h10.5l-5.25 6z" fill="#a4a4a4"/>
<rect x="68.5" y="17.5" width="150.5" height="19.5" rx="2.5" fill="#d8d8d8" stroke="#bdbdbd" stroke-width="1"/>
<path d="M69.5 37.5h147q2.5 0 2.5-2.5v-15" fill="none" stroke="#f6f6f6" stroke-width="1.2"/>
<rect x="202" y="18.5" width="16.5" height="17.5" rx="1.5" fill="url(#dd)" stroke="#f8f8f8" stroke-width="0.8"/>
<path d="M205 24.5h10.5l-5.25 6z" fill="#a4a4a4"/>
<text x="72.6" y="32.6" font-size="12" fill="#f8f8f8" style="font-family:'Noto Sans CJK SC',sans-serif">单条曲线</text>
<text x="71.8" y="31.8" font-size="12" fill="#a2a2a2" style="font-family:'Noto Sans CJK SC',sans-serif">单条曲线</text>
<rect x="228.5" y="17.5" width="12" height="11.5" fill="#fff" stroke="#303088" stroke-width="1.2"/>
<text x="231.6" y="27.6" font-size="11.5" font-weight="bold" fill="#000" style="font-family:'Liberation Serif',serif">i</text>
<path d="M242.5 26.5l7 7-7 6.5-7-6.5z" fill="#fff" stroke="#282878" stroke-width="1.6"/><path d="M242.5 29v9l5-4.5z" fill="#3848a8"/>
<path d="M259 23l12-3v17l-12-2z" fill="#a8a8a8" stroke="#8c8c8c" stroke-width="0.6"/>
<circle cx="265" cy="22" r="3.6" fill="none" stroke="#a08888" stroke-width="1.1"/><path d="M265 16v24M259 22h13" stroke="#a08888" stroke-width="1"/>
<ellipse cx="275" cy="21.5" rx="3.2" ry="4.2" fill="none" stroke="#a09c84" stroke-width="2.2"/><ellipse cx="278" cy="28" rx="3.2" ry="4.4" fill="none" stroke="#a09c84" stroke-width="2.2"/>
<circle cx="298" cy="24.5" r="4" fill="none" stroke="#b09c9c" stroke-width="1.1"/><path d="M298 17v16M290 24.5h16" stroke="#b09c9c" stroke-width="1.1"/>
<path d="M297 38h4v-4h4v-4h4v-4h2v-3" fill="none" stroke="#a4a4a4" stroke-width="1.6"/><path d="M311 21l-2.2 4h4.4z" fill="#b09c9c"/>
<path d="M321 37l7-12M334 23l9 4.5" stroke="#8c8c8c" stroke-width="1.4"/><circle cx="330" cy="21.5" r="2.2" fill="#909090"/>
<path d="M352 35l8-17 15 2-6 10 4 7-10 2z" fill="#a0a4ac"/><path d="M361 17l13 17" stroke="#e0e0e0" stroke-width="1.4"/><path d="M362 19l13 2-5 6z" fill="#b4b4b4"/>
<path d="M383 19q4 1 9-2v10q-5 2-9 1z" fill="#a8acb4"/><path d="M384 29h6M386 31.5h6" stroke="#8c9098" stroke-width="1.4"/>
<path d="M392 25q6-3 12 0v11q-6 3-12 0z" fill="#b8b4a8"/><path d="M395 22q4-5 9-2l-3 4q-3-1-4 2z" fill="#b0aca0"/>
<path d="M414.5 22.5l5-4h17v16l-5 4h-17z" fill="#fafafa" stroke="#303030" stroke-width="0.9"/><path d="M414.5 22.5h17l5-4M431.5 22.5v16" fill="none" stroke="#505050" stroke-width="0.7"/>
<path d="M418 24l8-4.5 8 3.5v9.500l-8 4-8-3.500z" fill="#e01028"/><path d="M418 24l8 3.500 8-4.500-8-3.500z" fill="#f05070"/><path d="M426 27.500v9l8-4v-9.500z" fill="#a80818"/>
<path d="M446 22l16-3 8 3-17 4z" fill="#b0aca4"/><path d="M446 33l16-3 8 4-17 4z" fill="#a4a4a4"/><path d="M458 24v6l-2 0 3 3 3-3-2 0v-6z" fill="#9c9c9c"/>
<path d="M478 30l8-13 12 4v10l-8 6-10-3z" fill="#c850d8"/><path d="M486 17l12 4v10l-4 3z" fill="#a030c0"/><path d="M478 28l6-9 10 3-5 10z" fill="url(#og)"/><path d="M478 30l2 5 10 2.500" fill="none" stroke="#f0a0f0" stroke-width="2"/>
<path d="M492.500 28.500l7.500 10.500h-15z" fill="#fff" stroke="#181818" stroke-width="1.6"/><path d="M492.500 33.500l2.800 4h-5.600z" fill="#8a6a9a"/>
<path d="M508 22l10-4 10 5v10l-6 4h-12l-2-5z" fill="#a89cac"/><path d="M518 30l6 8h-12z" fill="#b4acb8" stroke="#988ca0" stroke-width="1"/>
<path d="M538 23l10-5 10 4v11l-10 5-10-4z" fill="#c060d0"/><path d="M538 23l10 3.500v11.500l-10-4z" fill="url(#og)"/><path d="M548 18l10 4-10 4.500-10-3.500z" fill="#f0b0f0"/><path d="M548 26.500l10-4.500v11l-10 5z" fill="#9838b8"/>
<path d="M552 26l7.500 11" stroke="#fff" stroke-width="3.6"/><path d="M552 26l7.500 11" stroke="#101010" stroke-width="2.2"/><path d="M551 21.500l1.200 2.600 2.800 0.400-2 2 0.500 2.800-2.500-1.300-2.500 1.300 0.500-2.800-2-2 2.800-0.400z" fill="#f8f060" stroke="#202020" stroke-width="0.6"/>
<path d="M573.500 16v9M569 20.500h9" stroke="#1848d8" stroke-width="2.2"/>
<path d="M577 29l2-3h5l1.500 2h6v10h-14.500z" fill="#d8c040"/><path d="M577 38l3-8h14.500l-3 8z" fill="url(#yl)" stroke="#c0a428" stroke-width="0.6"/>
<path d="M601 18l10 12M611 17l-9 13" stroke="#181818" stroke-width="2"/>
<path d="M608 29l2-3h5l1.500 2h6v10h-14.500z" fill="#d8c040"/><path d="M608 38l3-8h14.500l-3 8z" fill="url(#yl)" stroke="#c0a428" stroke-width="0.6"/>
<path d="M634 19h16l5 15h-26z" fill="#a8a8a8" stroke="#949494" stroke-width="0.8"/><path d="M638 30v-7h10v7M642 30v-4h4" fill="none" stroke="#8c8c8c" stroke-width="1"/>
<path d="M662 20l11-3 10 3-11 3.500z" fill="#d8f4e8" stroke="#38a878" stroke-width="1"/><path d="M662 32l11-3 10 3-11 4z" fill="#d8f4e8" stroke="#38a878" stroke-width="1"/><path d="M671.500 23.500h3v6h-3z" fill="#f06020"/><path d="M664 35l9 3 9-3" stroke="#a8a8a8" stroke-width="1.2" fill="none"/>
<path d="M693 19l11-3 10 3-11 3.500z" fill="#d8f4e8" stroke="#38a878" stroke-width="1"/><path d="M693 33l11-3 10 3-11 4z" fill="#d8f4e8" stroke="#38a878" stroke-width="1"/><path d="M698 23.500h9l3 2.500v5h-12z" fill="#d0d8f4" stroke="#7080c8" stroke-width="0.8"/><circle cx="702" cy="27.500" r="2.200" fill="none" stroke="#7080c8" stroke-width="0.8"/>
<path d="M722.0 34.5h7l-3.5 4z" fill="#000"/>
<rect x="733" y="12" width="1" height="32" fill="#c6c6c6"/>
<rect x="734" y="12" width="1.5" height="32" fill="#f6f6f6"/>
<rect x="739" y="18" width="2" height="2" fill="#f8f8f8"/><rect x="739" y="18" width="1" height="1" fill="#909090"/>
<rect x="739" y="21" width="2" height="2" fill="#f8f8f8"/><rect x="739" y="21" width="1" height="1" fill="#909090"/>
<rect x="739" y="24" width="2" height="2" fill="#f8f8f8"/><rect x="739" y="24" width="1" height="1" fill="#909090"/>
<rect x="739" y="27" width="2" height="2" fill="#f8f8f8"/><rect x="739" y="27" width="1" height="1" fill="#909090"/>
<rect x="739" y="30" width="2" height="2" fill="#f8f8f8"/><rect x="739" y="30" width="1" height="1" fill="#909090"/>
<rect x="739" y="33" width="2" height="2" fill="#f8f8f8"/><rect x="739" y="33" width="1" height="1" fill="#909090"/>
<rect x="739" y="36" width="2" height="2" fill="#f8f8f8"/><rect x="739" y="36" width="1" height="1" fill="#909090"/>
<rect x="739" y="39" width="2" height="2" fill="#f8f8f8"/><rect x="739" y="39" width="1" height="1" fill="#909090"/>
<path d="M746 26l4-4 15-1.500v11l-16 2z" fill="#a8a8a0" stroke="#989890" stroke-width="0.6"/><path d="M765 24h3v7h-3" fill="none" stroke="#a0a0a0" stroke-width="1"/>
<path d="M776 17h8l3 3v10h-11z" fill="#a8a8a8"/><path d="M785 26h8l3 3v11h-11z" fill="#a4a4a4"/><path d="M777 21h8M777 24h8M777 27h6M786 31h8M786 34h8M786 37h8" stroke="#949494" stroke-width="0.8"/>
<text x="790" y="25.500" font-size="13" fill="#8c8c8c" style="font-family:'Liberation Serif',serif">A</text>
<path d="M806.0 34.5h7l-3.5 4z" fill="#000"/>
<rect x="817" y="12" width="1" height="32" fill="#ececec"/>
<circle cx="-3" cy="62" r="10" fill="none" stroke="#b81848" stroke-width="1.8"/><path d="M4 52l2 2M7 50v6M1 70h10M6 66v8" stroke="#c02040" stroke-width="1" stroke-dasharray="2 1.2"/><path d="M4.500 55q4 7 0 14" fill="none" stroke="#202020" stroke-width="1.2"/>
<path d="M20.500 56l9-5 13 5v12l-9 5-13-5z" fill="#e4ecfc" fill-opacity="0.6" stroke="#3858c8" stroke-width="1"/><path d="M20.500 56l13 5 9-5M33.500 61v12M29.500 51v12l-9 5M29.500 63l13 5" fill="none" stroke="#4868d0" stroke-width="0.9"/><path d="M29.500 55.500l4 5.500 9-5v12l-9 5v-9l-4-1z" fill="url(#bl)"/>
<rect x="52" y="51" width="8.500" height="22.500" fill="url(#rb)"/><path d="M65 60l6.500 13" stroke="#5858d0" stroke-width="2.400"/><path d="M64.500 50.500l1.300 4 4-1.300-2.800 3.300 2.800 2.700-4-0.700-1.300 4-1-4-4 0.700 3-2.700-3-3.300 4 1.300z" fill="#f4f8a0"/>
<path d="M82 59v14h17" fill="none" stroke="#c85858" stroke-width="1.300"/><path d="M82 63q10 0 11 10" fill="none" stroke="#b83838" stroke-width="1.300"/><path d="M85 54.500l3-3 16 16-3 3z" fill="#f8e070" stroke="#c09020" stroke-width="1.100"/><path d="M88 55l12 12" stroke="#c8a030" stroke-width="0.800" stroke-dasharray="1 1.200"/>
<path d="M113 66.500l10-3 12 3.500-10 5z" fill="#a8c8f8"/><path d="M113 66.500v2.500l12 6 10-5v-3l-10 5z" fill="#4c84dc"/><path d="M119 62h10v4.500q-5 3-10 0z" fill="url(#bl2)"/><path d="M122.500 56.500h4v9h-4z" fill="#b8d0f8" stroke="#78a0e0" stroke-width="0.600"/><path d="M121.500 59.500a4.600 4.600 0 1 1 2-6.500" fill="none" stroke="#2838a8" stroke-width="2"/><path d="M125.500 51.500l-0.500 4.500-4-1.500z" fill="#2838a8"/>
<path d="M145 66l3-3h9v9l-3 3h-9z" fill="#10e030" stroke="#103090" stroke-width="1.300"/><path d="M145 66h9v9M154 66l3-3" fill="none" stroke="#103090" stroke-width="1"/>
<path d="M155 55l3-3h9v9l-3 3h-9z" fill="#10e030" stroke="#103090" stroke-width="1.300"/><path d="M155 55h9v9M164 55l3-3" fill="none" stroke="#103090" stroke-width="1"/><path d="M154 66l3-4" stroke="#e0f080" stroke-width="1.600"/>
<text x="177" y="59.500" font-size="8.600" font-weight="bold" fill="#1828c8" textLength="12.500" lengthAdjust="spacingAndGlyphs" style="font-family:'Liberation Sans',sans-serif">PRT</text>
<path d="M183.500 70.500q5-1 6-5l-2-1.500 5.500-3.500 2.500 6-2.500-0.500q-2 5-9.500 4.500z" fill="#1020e0"/>
<path d="M210.500 54v18.500M210.500 58h12M210.500 64h8M210.500 70h12" stroke="#000" stroke-width="1.500" fill="none"/>
<rect x="206.5" y="51.5" width="7.5" height="3.200" fill="#f8e848" stroke="#000" stroke-width="0.900"/>
<rect x="221.5" y="56" width="6.5" height="3.200" fill="#f8e848" stroke="#000" stroke-width="0.900"/>
<rect x="221.5" y="68" width="6.5" height="3.200" fill="#f8e848" stroke="#000" stroke-width="0.900"/>
<rect x="215" y="62" width="13" height="3.600" fill="#f8e848" stroke="#000" stroke-width="0.900"/><path d="M217 63.800h9" stroke="#000" stroke-width="1" stroke-dasharray="1.200 1"/>
<path d="M237 66l11-3.500 11 3.500-11 4z" fill="#d8ecd8" stroke="#58886c" stroke-width="0.900"/>
<path d="M237 62.5l11-3.500 11 3.500-11 4z" fill="#d8ecd8" stroke="#58886c" stroke-width="0.900"/>
<path d="M237 59l11-3.500 11 3.500-11 4z" fill="#d8ecd8" stroke="#58886c" stroke-width="0.900"/>
<path d="M237 55.5l11-3.500 11 3.500-11 4z" fill="#a8c8a8" stroke="#58886c" stroke-width="0.900"/>
<path d="M239 69.500l9 3 9-3" fill="none" stroke="#a0a0a0" stroke-width="1.200"/>
<path d="M270.500 52h4v14h-4z" fill="url(#bl2)" stroke="#5080d8" stroke-width="0.700"/><path d="M267.500 66h10v4q-5 3-10 0z" fill="#78a8f0" stroke="#4070d0" stroke-width="0.700"/>
<path d="M279.500 53h10q1.500 0 1.500 1.500v16q0 1.500-1.500 1.500h-10v-5h4.500v-9h-4.500z" fill="url(#yl)" stroke="#c89820" stroke-width="0.900"/><circle cx="286" cy="56" r="1.100" fill="#303030"/><circle cx="286" cy="69" r="1.100" fill="#303030"/>
<rect x="303.500" y="65" width="6" height="6" fill="#f8e060" stroke="#c8a020" stroke-width="0.800"/><rect x="308" y="59" width="6" height="6" fill="#fff" stroke="#606060" stroke-width="0.800"/><rect x="311" y="52.500" width="6" height="6" fill="#fff" stroke="#606060" stroke-width="0.800"/>
<path d="M330.5 53.5l5.9-2 2.5 1.500v6.1l-2.5 2.200h-5.9z" fill="#f0c030"/><rect x="330.5" y="53.5" width="5.9" height="6.6" fill="#fff4a8"/>
<path d="M330.5 66.5l5.9-2 2.5 1.500v6.1l-2.5 2.200h-5.9z" fill="#f0c030"/><rect x="330.5" y="66.5" width="5.9" height="6.6" fill="#fff4a8"/>
<path d="M343 66.5l5.9-2 2.5 1.500v6.1l-2.5 2.200h-5.9z" fill="#f0c030"/><rect x="343" y="66.5" width="5.9" height="6.6" fill="#fff4a8"/>
<path d="M366 56l12-4q6 1 6 8l-12 7z" fill="url(#bl2)"/><path d="M366 56l12-4q6 1 6 8" fill="none" stroke="#8090b0" stroke-width="0.800"/><ellipse cx="367.500" cy="63" rx="6.500" ry="7" fill="#d8e0f0" stroke="#6878a0" stroke-width="1"/><ellipse cx="367.500" cy="63.500" rx="3.500" ry="4" fill="#384878"/><path d="M368 70l6 1 8-5" fill="none" stroke="#8890a0" stroke-width="1.400"/>
<rect x="391.500" y="50" width="24" height="24" fill="#ff00ff"/><rect x="399" y="54.500" width="8" height="16" fill="#20e020" stroke="#f0f040" stroke-width="1.300"/><path d="M403 52.500v20" stroke="#101010" stroke-width="1" stroke-dasharray="1.500 1.500"/>
<rect x="430" y="54.500" width="8.500" height="15" fill="#10e830" stroke="#103890" stroke-width="1.300"/><path d="M434.200 51.500l1.500 2-1.500 1.500-1.500-1.500zM434.200 70l1.500 2-1.500 2-1.500-2z" fill="none" stroke="#e04020" stroke-width="0.900"/>
<path d="M465 55h-3.500l-6.500 14" fill="none" stroke="#101010" stroke-width="1.200"/><path d="M454 70.500l0.300-4 3 1.500z" fill="#101010"/>
<text x="466.800" y="56.8" font-size="7" font-weight="bold" fill="#c81010" style="font-family:'Liberation Sans',sans-serif">X=</text>
<text x="466.800" y="65.0" font-size="7" font-weight="bold" fill="#c81010" style="font-family:'Liberation Sans',sans-serif">Y=</text>
<text x="466.800" y="73.2" font-size="7" font-weight="bold" fill="#c81010" style="font-family:'Liberation Sans',sans-serif">Z=</text>
<path d="M486.0 56.5l4.500 5.500 4.500-9.500" fill="none" stroke="#48d050" stroke-width="3" stroke-linejoin="round"/>
<path d="M491.5 60.7l4.500 5.500 4.500-9.500" fill="none" stroke="#48d050" stroke-width="3" stroke-linejoin="round"/>
<path d="M497.0 64.9l4.500 5.500 4.500-9.500" fill="none" stroke="#48d050" stroke-width="3" stroke-linejoin="round"/>
<path d="M519.500 72v-19h9q5.500 0 5.500 5.500t-5.500 5.500h-5" fill="none" stroke="#1010c0" stroke-width="4"/><path d="M519.500 72v-19h9q5.500 0 5.500 5.500t-5.500 5.500h-5" fill="none" stroke="#f4f4ff" stroke-width="0.900"/>
<text x="528" y="73.200" font-size="6.800" font-weight="bold" fill="#e01818" style="font-family:'Liberation Sans',sans-serif">NC</text>
<path d="M549 55h17v13h-17z" fill="#e8ecf8" stroke="#a8b0c8" stroke-width="0.800"/><path d="M549 55l8 6 9-6" fill="#d0d8f0"/><rect x="560" y="62" width="7" height="6" fill="#f4f4f8" stroke="#9098b0" stroke-width="0.700"/><path d="M557 56q2-4 6-3l4 2-3 4q-4 1-7-3z" fill="#f0d090"/><path d="M563 52.500l4-2 2.500 4.500-3.500 2z" fill="#4050c0"/><path d="M566 70h3v3h-3zM565 71.500l-1.500 0" stroke="#303030" stroke-width="0.800" fill="#e0e0e0"/>
<rect x="579" y="51.500" width="3.500" height="11.500" fill="#1018b8"/><path d="M579 65v3.500q0 1.500 2 1.500h3" fill="none" stroke="#e01818" stroke-width="1.800"/><path d="M583 67l3.500 3-3.500 3z" fill="#e01818"/>
<rect x="588" y="58" width="13.500" height="14.500" fill="#fff" stroke="#1018a0" stroke-width="1.400"/><path d="M591.500 61v8.500M593 62h6M593 65.500h6M593 69h6" stroke="#101870" stroke-width="1.100"/>
<rect x="612.500" y="52" width="4.500" height="15" fill="#3858c8" stroke="#182880" stroke-width="0.500"/><path d="M612.500 55h4.500M612.500 58h4.500M612.500 61h4.500M612.500 64h4.500" stroke="#a8c0f0" stroke-width="0.700"/><path d="M618 58l13-2M618 61.500l10-1.500M618 65l7-1" stroke="#404040" stroke-width="1.600"/><path d="M611 67h8l-4 3z" fill="#506080"/><path d="M610 71l5-1.500 5 1.500" stroke="#e8e040" stroke-width="1.200" fill="none"/>
<path d="M644.500 53.500l1.500-2h6l1.500 2h6v11h-15z" fill="#f0e060" stroke="#c8b030" stroke-width="0.600"/><path d="M651 58.500h5M651 58.500v4h5v-1.500" fill="none" stroke="#707010" stroke-width="1.100"/><path d="M641 57v15.500M641 57h3M641 66.500h14M641 72h14" fill="none" stroke="#389068" stroke-width="1.100"/><rect x="655" y="64.500" width="6.500" height="3.500" rx="1.500" fill="#50c890" stroke="#288860" stroke-width="0.700"/><rect x="655" y="70" width="6.500" height="3.500" rx="1.500" fill="#50c890" stroke="#288860" stroke-width="0.700"/>
<rect x="671.500" y="51" width="4.500" height="11.500" fill="#3858c8"/><path d="M671.500 54h4.500M671.500 57h4.500M671.500 60h4.500" stroke="#a8c0f0" stroke-width="0.700"/><path d="M677 56h7l-2 4h-5z" fill="#707880"/><path d="M680 70.500l6-6q-2-4 2-6l1 3.500 3 0.500 1.500-2.500q2 4-2 6.500l-3-0.500-6 6.500q-2.500 0-2.500-2z" fill="#f0c830" stroke="#b08818" stroke-width="0.700"/>
<rect x="701.500" y="50" width="24" height="24" fill="#ff00ff"/><rect x="703.500" y="51" width="3.800" height="12" fill="#2020c0"/><rect x="711.500" y="57" width="3.800" height="12" fill="#2020c0"/><path d="M703 67l4 3-4 3z" fill="#e81030"/><path d="M715.500 60h8M715.500 65h8M715.500 70h8" stroke="#401040" stroke-width="0.900"/><rect x="716.500" y="58.500" width="2.500" height="2.500" fill="none" stroke="#401040" stroke-width="0.800"/><rect x="716.500" y="63.700" width="2.500" height="2.500" fill="none" stroke="#401040" stroke-width="0.800"/><rect x="716.500" y="68.800" width="2.500" height="2.500" fill="none" stroke="#401040" stroke-width="0.800"/>
<rect x="732.500" y="50" width="24.500" height="24" fill="#ff00ff"/><path d="M734 53.500h9M734 57.500h9M734 61.500h9" stroke="#401040" stroke-width="0.900"/><rect x="734" y="52" width="2.500" height="2.500" fill="none" stroke="#401040" stroke-width="0.800"/><rect x="734" y="56" width="2.500" height="2.500" fill="none" stroke="#401040" stroke-width="0.800"/><rect x="734" y="60.200" width="2.500" height="2.500" fill="none" stroke="#401040" stroke-width="0.800"/><path d="M734 66.500h5l0-2 3.500 3-3.500 3 0-2h-5z" fill="#f01040"/>
<rect x="743.500" y="58.500" width="11.500" height="13.500" fill="#fff" stroke="#4010a0" stroke-width="1.300"/><path d="M746 61v8.500M747.500 62h5.500M747.500 65.500h5.500M747.500 69h5.500" stroke="#101870" stroke-width="1"/>
<path d="M764 52h21v5h-15v16h-6z" fill="#ffff10"/><path d="M785 57h-9q-3-4-7-1t0 8v9" fill="none" stroke="#101010" stroke-width="1.100"/><path d="M772.500 63l8.500 8.500" stroke="#e03030" stroke-width="1.400" stroke-dasharray="1.200 1.600"/>
<path d="M795 60q0-5 6-5h15v10l-5 6h-13q-3 0-3-5z" fill="none" stroke="#e07070" stroke-width="0.800" stroke-dasharray="2 0.800"/><path d="M798 63q0-5 8-5l10 1v8l-5 3h-10q-3 0-3-7z" fill="url(#bl)"/><path d="M807 58l9 1v8l-5 3z" fill="#1848d0"/><path d="M798 63q1-5 8-5q-1 6 0 12h-5q-3 0-3-7z" fill="#c8d8f8"/>
<path d="M827 57l10-5.500 10 4v6h-6v10l-4 0.500-10-4.500z" fill="#c060d0"/><path d="M837 51.500l10 4-10 5-10-3.500z" fill="#e8b0f0"/><path d="M827 57l10 3.500v11.500l-10-4.500z" fill="url(#og)"/><rect x="839.500" y="61" width="8.500" height="12" fill="#fff"/><path d="M841 62.500h5.500l-5.500 2.500h5.500l-5.500 2.500h5.500l-5.500 2.500h5.500" fill="none" stroke="#101010" stroke-width="1.100" stroke-linejoin="round"/>
<path d="M857 53.500h7" stroke="#e03838" stroke-width="1"/><rect x="859.500" y="59.500" width="13" height="13" fill="#20a890" stroke="#101010" stroke-width="1"/><circle cx="872.500" cy="59.500" r="6" fill="none" stroke="#101010" stroke-width="1.100"/>
<text x="888.500" y="70.600" font-size="28" fill="#000" style="font-family:'Liberation Serif',serif">A</text>
<text x="921.500" y="59.500" font-size="7.200" font-weight="bold" fill="#1828c8" textLength="12" lengthAdjust="spacingAndGlyphs" style="font-family:'Liberation Sans',sans-serif">DXF</text>
<path d="M927.500 70.500q5-1 6-5l-2-1.500 5.500-3.500 2.500 6-2.500-0.500q-2 5-9.500 4.500z" fill="#1020e0"/>
<rect x="949.500" y="50" width="24" height="24" fill="#ff00ff"/>
<text x="951.500" y="59" font-size="7.600" font-weight="bold" fill="#6020c0" textLength="20" lengthAdjust="spacingAndGlyphs" style="font-family:'Liberation Sans',sans-serif">INCH</text>
<text x="955" y="72" font-size="7.600" font-weight="bold" fill="#6020c0" textLength="13" lengthAdjust="spacingAndGlyphs" style="font-family:'Liberation Sans',sans-serif">MM</text>
<path d="M951.500 62.500h20" stroke="#f01050" stroke-width="2.600"/>
<path d="M983 67.5l10.500-4 10.500 4-10.500 4.500z" fill="#28a0e8" stroke="#b8e4fc" stroke-width="0.800"/>
<path d="M983 64l10.500-4 10.500 4-10.500 4.500z" fill="#28a0e8" stroke="#b8e4fc" stroke-width="0.800"/>
<path d="M983 60.5l10.500-4 10.500 4-10.500 4.500z" fill="#28a0e8" stroke="#b8e4fc" stroke-width="0.800"/>
<path d="M983.500 56.500l10-4 10 4-10 4z" fill="#f8d830" stroke="#f8f0a0" stroke-width="0.600"/>
<path d="M1014 62q1-9 11-10.500t10 5-6 5.500-2 4.500-6 5-7-9.500z" fill="#f4e8c8" stroke="#b09050" stroke-width="0.900"/><circle cx="1020" cy="56" r="1.800" fill="#3070d0"/><circle cx="1025.500" cy="53.500" r="1.800" fill="#f0d020"/><circle cx="1031" cy="55.500" r="1.800" fill="#e04020"/><circle cx="1031.500" cy="61" r="1.600" fill="#30b040"/><path d="M1015.500 72.500l7-7q-2-3 1-5l1 2.500 2.500 0.500 1-2q2 3.500-1.500 5.500l-2.500-0.500-6.500 7.500q-2.500 0.500-2-1.500z" fill="#f0c830" stroke="#a88018" stroke-width="0.700"/>
<path d="M1045 60l9-4.500 8 3v10l-8 4.500-9-3.500z" fill="#e89828"/><path d="M1045 60l9 3v10l-9-3.500z" fill="url(#og)"/><path d="M1054 55.500l8 3-8 4.500-9-3z" fill="#fce8a0"/><path d="M1054 63v10l8-4.500v-10z" fill="#d08018"/><path d="M1057 58l6.500-6 3 3-6.500 6z" fill="#f0e0b0" stroke="#a09060" stroke-width="0.500"/><path d="M1063 52.500l2-2 3 3-2 2z" fill="#3038b0"/>
<path d="M1074.500 52l4-1 3 4-5 1.500z" fill="#205020"/><path d="M1076 56l5.500-2 3.500 7-6 2z" fill="#d8e880"/><path d="M1079 63l6-2 3 5" fill="#f0f4d8"/><rect x="1084" y="59" width="12.500" height="14" fill="#f4f4fc" stroke="#8088c0" stroke-width="0.900"/><path d="M1088 62.500h7M1088 66h7M1088 69.500h7" stroke="#8088c0" stroke-width="1"/><rect x="1085.500" y="64.500" width="2" height="2" fill="none" stroke="#a0a060" stroke-width="0.600"/><rect x="1085.500" y="68.500" width="2" height="2" fill="none" stroke="#a0a060" stroke-width="0.600"/>
<path d="M1106 54.500l1.500-2h6v8l-1.500 2h-6z" fill="#f8d030" stroke="#e02810" stroke-width="1.200"/><path d="M1107 65v3q0 1.500 2 1.500h2" fill="none" stroke="#e01818" stroke-width="1.600"/><path d="M1110.500 66.500l3.500 3-3.500 3z" fill="#e01818"/>
<rect x="1114.500" y="57.500" width="12.500" height="15" fill="#fff" stroke="#1018a0" stroke-width="1.300"/><path d="M1117 59.500h8" stroke="#101870" stroke-width="0.800" stroke-dasharray="0.800 0.800"/><path d="M1118 62v8.500M1119.500 63h5.500M1119.500 69.500h5.500" stroke="#101870" stroke-width="1.100"/>
<rect x="1138.500" y="52.500" width="18.500" height="9" fill="#e8ecff" stroke="#1820b0" stroke-width="1.300"/>
<text x="1141" y="59.800" font-size="6.800" font-weight="bold" fill="#1820b0" textLength="14" lengthAdjust="spacingAndGlyphs" style="font-family:'Liberation Sans',sans-serif">FIT</text>
<path d="M1146 61.500v5" stroke="#1820b0" stroke-width="1.200"/><path d="M1140 68l1.500-1.500h7v4l-1.500 1.500h-7z" fill="#f8c830" stroke="#e03010" stroke-width="1.100"/>
<path d="M1167 55.500h2.500v14h-2.500" fill="none" stroke="#1820b0" stroke-width="1.500"/><path d="M1172 57.500h4M1174 55.500v4M1172 67.500h4" stroke="#1820b0" stroke-width="1.100"/><rect x="1177.500" y="55.500" width="11" height="4" fill="#e8ecff" stroke="#1820b0" stroke-width="1.300"/><rect x="1177.500" y="65.500" width="11" height="4" fill="#e8ecff" stroke="#1820b0" stroke-width="1.300"/>
<path d="M1199 56l2.500-3h6l2 2.500h9v14h-19.500z" fill="#d8c848"/><path d="M1198.500 71l3.500-12h19l-3.500 12z" fill="url(#yl)" stroke="#c0a828" stroke-width="0.700"/><path d="M1208 53q6-3 9 2l2-1-0.500 5.500-5-2 2-1q-2-3-7-1.500z" fill="#38b048" stroke="#208030" stroke-width="0.500"/>
<path d="M1227.5 68h7l-3.5 4z" fill="#000"/>
<rect x="1239" y="46" width="1" height="34" fill="#e6e6e6"/>
<path d="M-2 92a3 3 0 0 0 4 3" fill="none" stroke="#808080" stroke-width="1.200"/>
<path d="M13 94l3-5.500h9l3 5.500v4l-3 1.500h-9l-3-1.500z" fill="#f4f4f4" stroke="#202020" stroke-width="1"/><path d="M13 94h15M16 88.500l3 5.500v5.500" fill="none" stroke="#202020" stroke-width="0.800"/><path d="M18 90.500h6" stroke="#e02020" stroke-width="1.200"/>
<path d="M36 91q2-4 6-3" fill="none" stroke="#909090" stroke-width="1.600"/><path d="M41 86l3.500 2.500-3.500 2z" fill="#909090"/><circle cx="45.500" cy="95" r="2.600" fill="none" stroke="#a09090" stroke-width="0.900"/><path d="M45.500 89.500v11M40 95h11" stroke="#a09090" stroke-width="0.900"/>
<path d="M58 88l3-1.500 3 1 3-0.500 1 2.500-4 0.500-3-0.500z" fill="#909090"/><path d="M66 91h4v4h3v5h-3v-4h-4z" fill="#a0a0a0"/><path d="M69 96v4h4" stroke="#909090" stroke-width="1.400" fill="none"/>
<rect x="81" y="81" width="1" height="27" fill="#c6c6c6"/>
<rect x="82" y="81" width="1.5" height="27" fill="#f6f6f6"/>
<rect x="88" y="88" width="13" height="12" fill="none" stroke="#101010" stroke-width="1.200" stroke-dasharray="2 1.500"/><circle cx="88" cy="88" r="1.300" fill="#e02020"/><circle cx="101" cy="100" r="1.300" fill="#e02020"/>
<path d="M110.0 91h7l-3.5 4z" fill="#000"/>
<rect x="121" y="81" width="1" height="27" fill="#c6c6c6"/>
<rect x="122" y="81" width="1.5" height="27" fill="#f6f6f6"/>
<path d="M128.500 90l7.500-3 7.500 3v8l-7.500 3.500-7.500-3.500z" fill="#58a0f0"/><path d="M128.500 90l7.500 3v8.500l-7.500-3.500z" fill="#88c0f8"/><path d="M136 87l7.500 3-7.500 3-7.500-3z" fill="#d8ecff"/><path d="M136 93v8.500l7.500-3.500v-8z" fill="#2870e0"/><path d="M136 87.500v5.500l-6-2.500M136 93l7-3" stroke="#e07070" stroke-width="0.700" fill="none"/>
<text y="124.6" font-size="12" font-weight="bold" fill="#000" style="font-family:'Liberation Sans','Noto Sans CJK SC',sans-serif"><tspan x="539">1</tspan><tspan x="551"> </tspan><tspan x="551" letter-spacing="0.9">个对象</tspan><tspan x="589" letter-spacing="0"> </tspan><tspan x="593.5" letter-spacing="0.9">已取消选择</tspan><tspan x="658" letter-spacing="0">  </tspan><tspan x="666.5">-</tspan><tspan x="671"> </tspan><tspan x="674.5" letter-spacing="0.9">全部</tspan><tspan x="700.5" letter-spacing="0"> </tspan><tspan x="704.5">0</tspan></text>
</svg>
</body></html>
